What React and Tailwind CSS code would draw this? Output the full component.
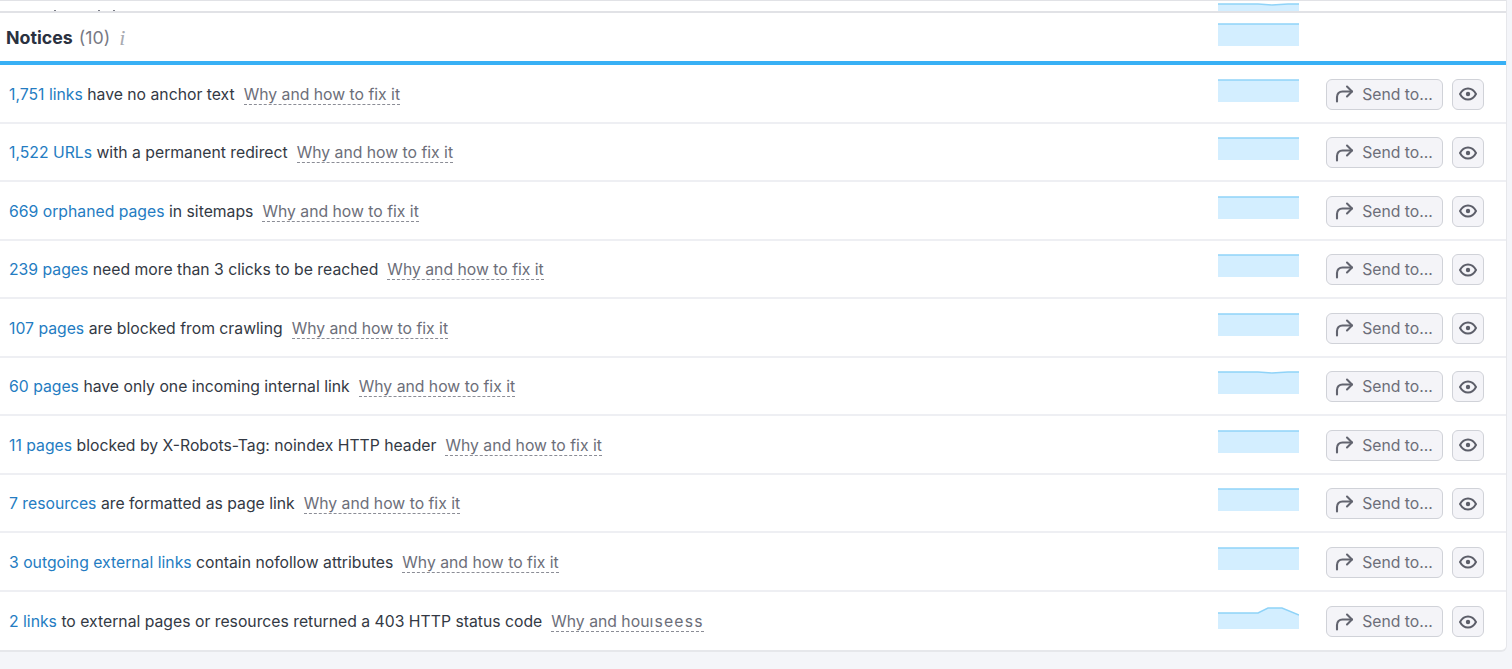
import React from 'react';

const rows = [
  { link: '1,751 links', text: 'have no anchor text' },
  { link: '1,522 URLs', text: 'with a permanent redirect' },
  { link: '669 orphaned pages', text: 'in sitemaps' },
  { link: '239 pages', text: 'need more than 3 clicks to be reached' },
  { link: '107 pages', text: 'are blocked from crawling' },
  { link: '60 pages', text: 'have only one incoming internal link', dip: true },
  { link: '11 pages', text: 'blocked by X-Robots-Tag: noindex HTTP header' },
  { link: '7 resources', text: 'are formatted as page link' },
  { link: '3 outgoing external links', text: 'contain nofollow attributes' },
  { link: '2 links', text: 'to external pages or resources returned a 403 HTTP status code', bump: true },
];

function Spark({ dip, bump }) {
  let line = '0,1 81,1';
  if (dip) line = '0,1 40,1 54,2 70,1 81,1';
  if (bump) line = '0,7 40,7 50,2 64,2 81,9';
  return (
    <svg width="81" height="23" viewBox="0 0 81 23" className="block shrink-0 -mt-[8px]">
      <polygon points={`${line} 81,23 0,23`} fill="#d3eeff" />
      <polyline points={line} fill="none" stroke="#8fd3f8" strokeWidth="1.4" />
    </svg>
  );
}

function SendIcon() {
  return (
    <svg width="19" height="18" viewBox="0 0 19 18" fill="none" stroke="#62646f" strokeWidth="2.1" strokeLinecap="round" strokeLinejoin="round">
      <path d="M2 16.5V12C2 8.8 4.2 6.5 7.5 6.5H17" />
      <path d="M12 1.5L17 6.5L12 11.5" />
    </svg>
  );
}

function EyeIcon() {
  return (
    <svg width="18" height="14" viewBox="0 0 18 14" fill="none" stroke="#5c5e69" strokeWidth="2">
      <path d="M1 7C3 3.2 5.8 1.5 9 1.5C12.2 1.5 15 3.2 17 7C15 10.8 12.2 12.5 9 12.5C5.8 12.5 3 10.8 1 7Z" />
      <circle cx="9" cy="7" r="2.2" fill="#5c5e69" stroke="none" />
    </svg>
  );
}

function Row({ row, last }) {
  return (
    <div className={`flex items-center h-[58.5px] pt-[2px] pl-[9px] pr-[22px] ${last ? '' : 'border-b-2 border-[#eeeff3]'}`}>
      <div className="flex-1 pt-[1px] text-[15.76px] whitespace-nowrap text-[#333944]">
        <a className="text-[#247cc2]">{row.link}</a> {row.text}
        {row.bump ? (
          <span className="ml-[9px] text-[#6c6e79] border-b border-dashed border-[#8b8d96]">
            Why and hou<span className="tracking-[1.2px]">ıseess</span>
          </span>
        ) : (
          <span className="ml-[9px] text-[#6c6e79] border-b border-dashed border-[#8b8d96]">Why and how to fix it</span>
        )}
      </div>
      <Spark dip={row.dip} bump={row.bump} />
      <button className="ml-[27px] w-[117px] h-[31px] flex items-center justify-center gap-[8px] pr-[1px] rounded-md border border-[#d0d2d8] bg-[#f4f4f8] text-[15.76px] text-[#6c6e79]">
        <SendIcon />
        <span className="pt-[1px]">Send to...</span>
      </button>
      <button className="ml-[9px] w-[32px] h-[31px] flex items-center justify-center rounded-md border border-[#d0d2d8] bg-[#f4f4f8]">
        <EyeIcon />
      </button>
    </div>
  );
}

export default function App() {
  return (
    <div className="w-[1512px] h-[669px] overflow-hidden bg-[#f4f5f9] font-['Inter',sans-serif]">
      <div className="w-[1507px] bg-white rounded-br-md border-r border-b-2 border-[#e6e7eb]">
        {/* tail of the section above */}
        <div className="h-[13px] border-t border-b-2 border-[#e1e2e6] flex justify-between pr-[207px]">
          <div className="flex items-end gap-[13px] pl-[54px]">
            <span className="w-[2px] h-[1px] bg-[#7c7e88] mr-[29px]" />
            <span className="w-[2px] h-[1px] bg-[#7c7e88]" />
            <span className="w-[2px] h-[1px] bg-[#7c7e88]" />
          </div>
          <svg width="81" height="8" viewBox="0 0 81 8" className="block mt-[2px]">
            <polygon points="0,1 40,1 54,2 70,1 81,1 81,8 0,8" fill="#d3eeff" />
            <polyline points="0,1 40,1 54,2 70,1 81,1" fill="none" stroke="#8fd3f8" strokeWidth="1.4" />
          </svg>
        </div>
        {/* header */}
        <div className="h-[48px] flex items-center pl-[6px] pr-[207px]">
          <div className="flex-1 flex items-center whitespace-nowrap pt-[2px]">
            <span className="text-[17.8px] font-bold text-[#2a3140]">Notices</span>
            <span className="ml-[6px] text-[17.8px] text-[#787a84]">(10)</span>
            <span className="ml-[9px] text-[22px] leading-none italic text-[#a8aab1] font-['Liberation_Serif',serif]">i</span>
          </div>
          <svg width="81" height="23" viewBox="0 0 81 23" className="block -mt-[6px]">
            <polygon points="0,1 81,1 81,23 0,23" fill="#d3eeff" />
            <polyline points="0,1 81,1" fill="none" stroke="#8fd3f8" strokeWidth="1.4" />
          </svg>
        </div>
        <div className="h-[4px] bg-[#38b0f5]" />
        {rows.map((r, i) => (
          <Row key={r.link} row={r} last={i === rows.length - 1} />
        ))}
      </div>
    </div>
  );
}
